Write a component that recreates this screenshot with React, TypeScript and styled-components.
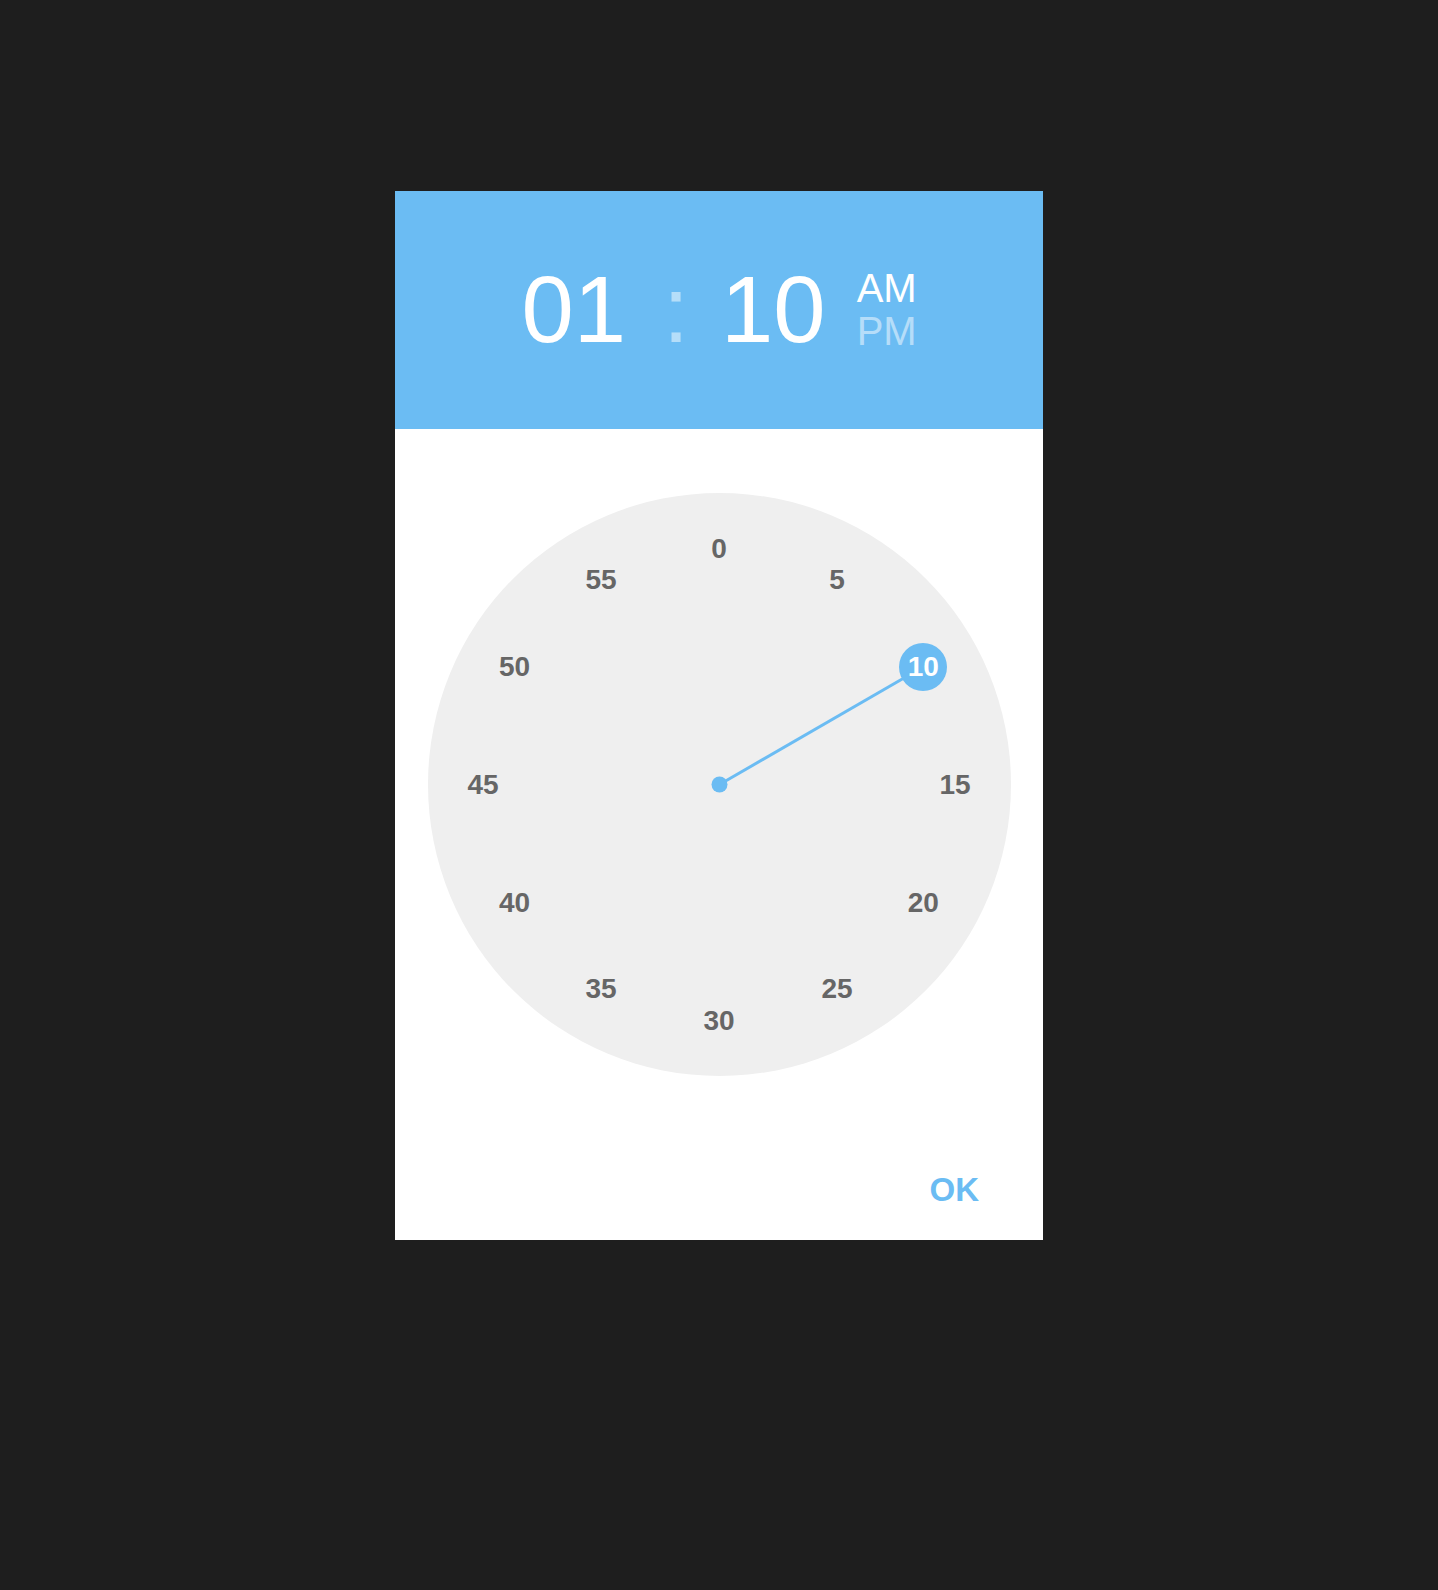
import * as React from 'react';
import styled, {createGlobalStyle} from 'styled-components';

const GlobalStyle = createGlobalStyle`
  html, body {
    margin: 0;
    padding: 0;
    background: #1e1e1e;
    font-family: "Liberation Sans", Arial, sans-serif;
  }
`;

const BLUE = '#6bbcf3';
const FACE = 583;
const RADIUS = 236;
const MINUTES = [0, 5, 10, 15, 20, 25, 30, 35, 40, 45, 50, 55];

const Page = styled.div`
  min-height: 1590px;
  padding-top: 191px;
  box-sizing: border-box;
  display: flex;
  justify-content: center;
  align-items: flex-start;
`;

const Card = styled.div`
  width: 648px;
  height: 1049px;
  background: #ffffff;
  display: flex;
  flex-direction: column;
`;

const Header = styled.div`
  height: 238px;
  background: ${BLUE};
  display: flex;
  align-items: center;
  justify-content: center;
  color: #ffffff;
`;

const Digits = styled.span`
  font-size: 94px;
  line-height: 1;
  font-weight: 400;
`;

const Colon = styled(Digits)`
  color: rgba(255, 255, 255, 0.5);
  margin: 0 32px 0 37px;
`;

const Period = styled.div`
  display: flex;
  flex-direction: column;
  margin-left: 31px;
  margin-top: 0;
`;

const PeriodLabel = styled.span<{ $active?: boolean }>`
  font-size: 40px;
  line-height: 43px;
  color: ${p => (p.$active ? '#ffffff' : 'rgba(255, 255, 255, 0.5)')};
`;

const Body = styled.div`
  flex: 1;
  display: flex;
  flex-direction: column;
  align-items: center;
  padding-top: 64px;
`;

const Face = styled.div`
  position: relative;
  width: ${FACE}px;
  height: ${FACE}px;
  border-radius: 50%;
  background: #efefef;
`;

const Hand = styled.svg`
  position: absolute;
  inset: 0;
`;

const Tick = styled.span<{ $selected?: boolean }>`
  position: absolute;
  width: 48px;
  height: 48px;
  margin: -24px 0 0 -24px;
  border-radius: 50%;
  display: flex;
  align-items: center;
  justify-content: center;
  font-size: 28px;
  font-weight: 700;
  color: ${p => (p.$selected ? '#ffffff' : '#666666')};
  background: ${p => (p.$selected ? BLUE : 'transparent')};
`;

const Footer = styled.div`
  align-self: stretch;
  display: flex;
  justify-content: flex-end;
  padding: 94px 64px 0;
`;

const OkButton = styled.button`
  border: none;
  background: none;
  padding: 0;
  font-family: "Liberation Sans", Arial, sans-serif;
  font-size: 33px;
  line-height: 40px;
  font-weight: 700;
  color: ${BLUE};
  cursor: pointer;
`;

const ClockFace = ({selected}: { selected: number }) => {
  const c = FACE / 2;
  const pos = (m: number) => {
    const a = (m / 60) * Math.PI * 2;
    return {x: c + Math.sin(a) * RADIUS, y: c - Math.cos(a) * RADIUS};
  };
  const end = pos(selected);

  return (
    <Face>
      <Hand width={FACE} height={FACE}>
        <line x1={c} y1={c} x2={end.x} y2={end.y} stroke={BLUE} strokeWidth={3} />
        <circle cx={c} cy={c} r={8} fill={BLUE} />
      </Hand>
      {MINUTES.map(m => {
        const p = pos(m);
        return (
          <Tick key={m} $selected={m === selected} style={{left: p.x, top: p.y}}>
            {m}
          </Tick>
        );
      })}
    </Face>
  );
};

const App = () => (
  <>
    <GlobalStyle />
    <Page>
      <Card>
        <Header>
          <Digits>01</Digits>
          <Colon>:</Colon>
          <Digits>10</Digits>
          <Period>
            <PeriodLabel $active>AM</PeriodLabel>
            <PeriodLabel>PM</PeriodLabel>
          </Period>
        </Header>
        <Body>
          <ClockFace selected={10} />
          <Footer>
            <OkButton>OK</OkButton>
          </Footer>
        </Body>
      </Card>
    </Page>
  </>
);

export default App;
